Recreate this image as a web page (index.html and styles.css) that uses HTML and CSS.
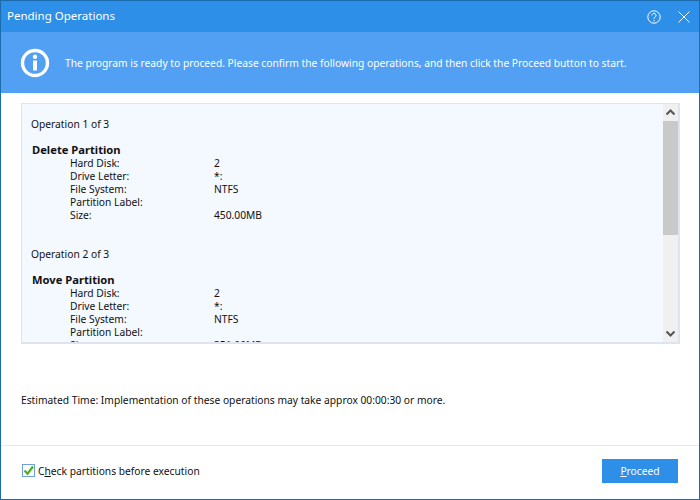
FILE: index.html
```html
<!DOCTYPE html>
<html lang="en">
<head>
<meta charset="utf-8">
<title>Pending Operations</title>
<link rel="stylesheet" href="styles.css">
</head>
<body>
<div class="window">
  <header class="titlebar">
    <span class="title">Pending Operations</span>
    <div class="controls">
      <svg class="ctl" width="16" height="16" viewBox="0 0 16 16" fill="none" stroke="#fff"><circle cx="8" cy="8" r="6.2"/><path d="M6 6.4a2 2 0 1 1 3.1 1.6c-.8.5-1.1.9-1.1 1.8"/><path d="M8 11v1.2"/></svg>
      <svg class="ctl" width="14" height="14" viewBox="0 0 14 14" fill="none" stroke="#fff"><path d="M1.5 1.5l11 11M12.5 1.5l-11 11"/></svg>
    </div>
  </header>
  <section class="banner">
    <svg class="info" width="30" height="30" viewBox="0 0 30 30"><circle cx="15" cy="15" r="12.5" fill="none" stroke="#fff" stroke-width="3.4"/><rect x="13" y="12.5" width="4" height="10" fill="#fff"/><circle cx="15" cy="8.8" r="2.2" fill="#fff"/></svg>
    <p class="message">The program is ready to proceed. Please confirm the following operations, and then click the Proceed button to start.</p>
  </section>
  <main class="content">
    <div class="panel">
      <div class="list">
        <div class="op">Operation 1 of 3</div>
        <div class="name">Delete Partition</div>
        <dl class="props">
          <dt>Hard Disk:</dt><dd>2</dd>
          <dt>Drive Letter:</dt><dd>*:</dd>
          <dt>File System:</dt><dd>NTFS</dd>
          <dt>Partition Label:</dt><dd></dd>
          <dt>Size:</dt><dd>450.00MB</dd>
        </dl>
        <div class="op">Operation 2 of 3</div>
        <div class="name">Move Partition</div>
        <dl class="props">
          <dt>Hard Disk:</dt><dd>2</dd>
          <dt>Drive Letter:</dt><dd>*:</dd>
          <dt>File System:</dt><dd>NTFS</dd>
          <dt>Partition Label:</dt><dd></dd>
          <dt>Size:</dt><dd>351.00MB</dd>
        </dl>
      </div>
      <div class="scrollbar">
        <svg class="arrow" width="15" height="17" viewBox="0 0 15 17" fill="none" stroke="#555" stroke-width="2"><path d="M3.5 10.5l4-4 4 4"/></svg>
        <div class="thumb"></div>
        <div class="track"></div>
        <svg class="arrow" width="15" height="17" viewBox="0 0 15 17" fill="none" stroke="#555" stroke-width="2"><path d="M3.5 6.5l4 4 4-4"/></svg>
      </div>
    </div>
    <p class="estimate">Estimated Time: Implementation of these operations may take approx 00:00:30 or more.</p>
  </main>
  <footer class="footer">
    <label class="check">
      <svg width="13" height="13" viewBox="0 0 13 13"><rect x=".5" y=".5" width="12" height="12" fill="#fff" stroke="#6f9fe0"/><path d="M2.5 6.5l3 3.2 5.5-7.2" fill="none" stroke="#4fb21c" stroke-width="2.2"/></svg>
      <span>C<u>h</u>eck partitions before execution</span>
    </label>
    <button class="proceed" type="button"><u>P</u>roceed</button>
  </footer>
</div>
</body>
</html>
```

FILE: styles.css
```css
* { box-sizing: border-box; }
html, body { margin: 0; height: 100%; }
body {
  font-family: "Noto Sans", "Liberation Sans", sans-serif;
  font-size: 10.25px;
  color: #111;
  background: #fff;
}
.window {
  width: 700px;
  height: 500px;
  display: flex;
  flex-direction: column;
  border: 1px solid #1b6cad;
  background: #fff;
}
.titlebar {
  height: 31px;
  flex: none;
  display: flex;
  align-items: center;
  justify-content: space-between;
  padding: 0 8px 0 6px;
  background: #2e8fe9;
  color: #fff;
}
.title { font-size: 11.5px; line-height: 15px; margin-bottom: 2px; }
.controls { display: flex; align-items: center; gap: 15px; }
.ctl { display: block; }
.banner {
  height: 61px;
  flex: none;
  display: flex;
  align-items: center;
  padding-left: 19px;
  gap: 15px;
  background: #52a0f4;
  color: #fff;
}
.info { flex: none; }
.message { margin: 0; }
.content { flex: 1; padding: 10px 19px 0 20px; min-height: 0; }
.panel {
  height: 241px;
  display: flex;
  border: 1px solid #dde3ef;
  border-width: 1px 2px 2px 1px;
  background: #f4f8ff;
}
.list {
  flex: 1;
  padding: 14px 0 0 9px;
  overflow: hidden;
  line-height: 13px;
}
.op { margin-bottom: 13px; }
.name { font-weight: 700; font-size: 11.2px; line-height: 11px; margin-bottom: 2px; padding-left: 1px; }
.props {
  margin: 0 0 26px;
  padding-left: 39px;
  display: grid;
  grid-template-columns: 144px 1fr;
  grid-auto-rows: 13px;
}
.props dt, .props dd { margin: 0; }
.scrollbar {
  flex: none;
  width: 15px;
  display: flex;
  flex-direction: column;
  background: #f0f0f0;
}
.arrow { display: block; flex: none; }
.thumb { height: 114px; flex: none; background: #c9c9c9; }
.track { flex: 1; }
.estimate { margin: 50px 0 0; line-height: 13px; }
.footer {
  height: 54px;
  flex: none;
  display: flex;
  align-items: center;
  justify-content: space-between;
  padding: 0 21px 4px 21px;
  border-top: 1px solid #e8e9f0;
}
.check { display: flex; align-items: center; gap: 3px; }
.check svg { display: block; }
.proceed {
  width: 76px;
  height: 24px;
  border: 0;
  padding: 0;
  background: #2e8fe9;
  color: #fff;
  font: inherit;
}
```
